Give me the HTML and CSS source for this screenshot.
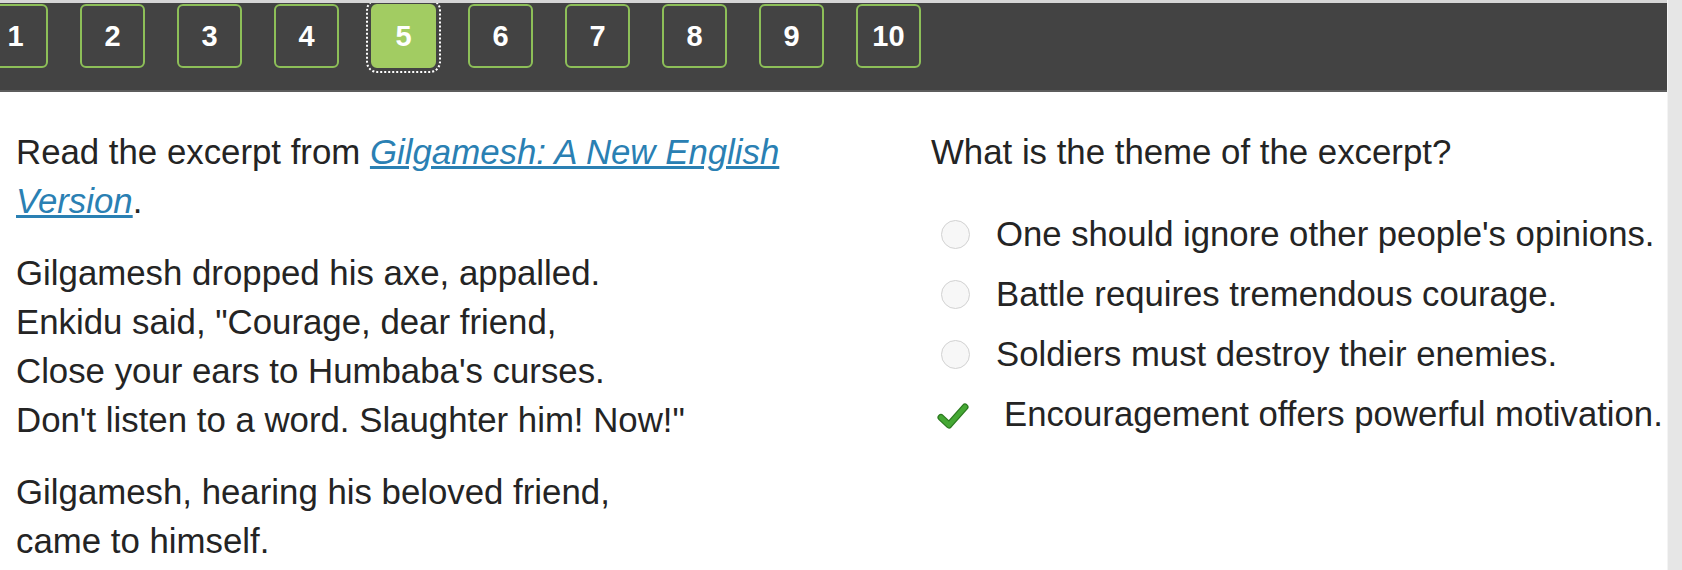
FILE: index.html
```html
<!DOCTYPE html>
<html lang="en">
<head>
<meta charset="utf-8">
<title>Gilgamesh question</title>
<link rel="stylesheet" href="styles.css">
</head>
<body>
<div class="page">
  <div class="main">
    <nav class="pager">
      <div class="pager-list">
        <span class="page-btn">1</span>
        <span class="page-btn">2</span>
        <span class="page-btn">3</span>
        <span class="page-btn">4</span>
        <span class="page-btn is-current">5</span>
        <span class="page-btn">6</span>
        <span class="page-btn">7</span>
        <span class="page-btn">8</span>
        <span class="page-btn">9</span>
        <span class="page-btn">10</span>
      </div>
    </nav>
    <div class="content">
      <section class="passage">
        <p class="para">Read the excerpt from <a class="title-link" href="#">Gilgamesh: A New English Version</a>.</p>
        <p class="para">Gilgamesh dropped his axe, appalled.<br>Enkidu said, "Courage, dear friend,<br>Close your ears to Humbaba's curses.<br>Don't listen to a word. Slaughter him! Now!"</p>
        <p class="para">Gilgamesh, hearing his beloved friend,<br>came to himself.</p>
      </section>
      <section class="question">
        <p class="prompt">What is the theme of the excerpt?</p>
        <ul class="options">
          <li class="option"><span class="radio"></span><span class="option-text">One should ignore other people's opinions.</span></li>
          <li class="option"><span class="radio"></span><span class="option-text">Battle requires tremendous courage.</span></li>
          <li class="option"><span class="radio"></span><span class="option-text">Soldiers must destroy their enemies.</span></li>
          <li class="option is-correct"><svg class="check" viewBox="0 0 32 28" width="32" height="28" aria-hidden="true"><path d="M4 15.5 L12 23 L28 5" fill="none" stroke="#2c7a20" stroke-width="7" stroke-linecap="round" stroke-linejoin="round"/><path d="M4 15.5 L12 23 L28 5" fill="none" stroke="#45a834" stroke-width="4.5" stroke-linecap="round" stroke-linejoin="round"/></svg><span class="option-text">Encouragement offers powerful motivation.</span></li>
        </ul>
      </section>
    </div>
  </div>
  <div class="scrollbar"></div>
</div>
</body>
</html>
```
FILE: styles.css
```css
* { box-sizing: border-box; }

html, body {
  margin: 0;
  padding: 0;
  background: #ffffff;
}

body {
  font-family: "Liberation Sans", Arial, Helvetica, sans-serif;
  color: #242424;
  overflow: hidden;
}

.page {
  display: flex;
  width: 1682px;
  height: 570px;
}

.main {
  flex: 1;
  min-width: 0;
  overflow: hidden;
}

.scrollbar {
  width: 15px;
  flex: 0 0 15px;
  background: #e6e6e6;
  border-left: 1px solid #f4f4f4;
}

/* Pager bar */
.pager {
  height: 92px;
  background: #434343;
  border-top: 3px solid #d6d6d6;
  border-bottom: 2px solid #5c5c5c;
  overflow: hidden;
}

.pager-list {
  display: flex;
  gap: 32px;
  padding-top: 1px;
  margin-left: -17px;
}

.page-btn {
  flex: 0 0 65px;
  width: 65px;
  height: 64px;
  border: 2px solid #8dbf58;
  border-radius: 6px;
  display: flex;
  align-items: center;
  justify-content: center;
  color: #ffffff;
  font-size: 29px;
  font-weight: bold;
}

.page-btn.is-current {
  background: #a2cc62;
  border-color: #a2cc62;
  outline: 2px dotted #ffffff;
  outline-offset: 3px;
}

/* Content */
.content {
  display: grid;
  grid-template-columns: 915px 1fr;
  padding-top: 35px;
}

.passage {
  padding-left: 16px;
  padding-right: 60px;
}

.para {
  margin: 0 0 23px;
  font-size: 34.8px;
  line-height: 49px;
}

.title-link {
  color: #2a80b3;
  font-style: italic;
  text-decoration: underline;
}

.question {
  padding-left: 16px;
}

.prompt {
  margin: 0 0 28px;
  font-size: 34.8px;
  line-height: 49px;
}

.options {
  list-style: none;
  margin: 0;
  padding: 0;
}

.option {
  display: flex;
  align-items: center;
  height: 60px;
  font-size: 34.7px;
  white-space: nowrap;
}

.radio {
  flex: 0 0 29px;
  width: 29px;
  height: 29px;
  margin-left: 10px;
  margin-right: 26px;
  border: 1px solid #d2d2d2;
  border-radius: 50%;
  background: #f7f7f7;
}

.check {
  flex: 0 0 32px;
  margin-left: 6px;
  margin-right: 35px;
  margin-top: 3px;
}

.option-text {
  display: block;
}
```
